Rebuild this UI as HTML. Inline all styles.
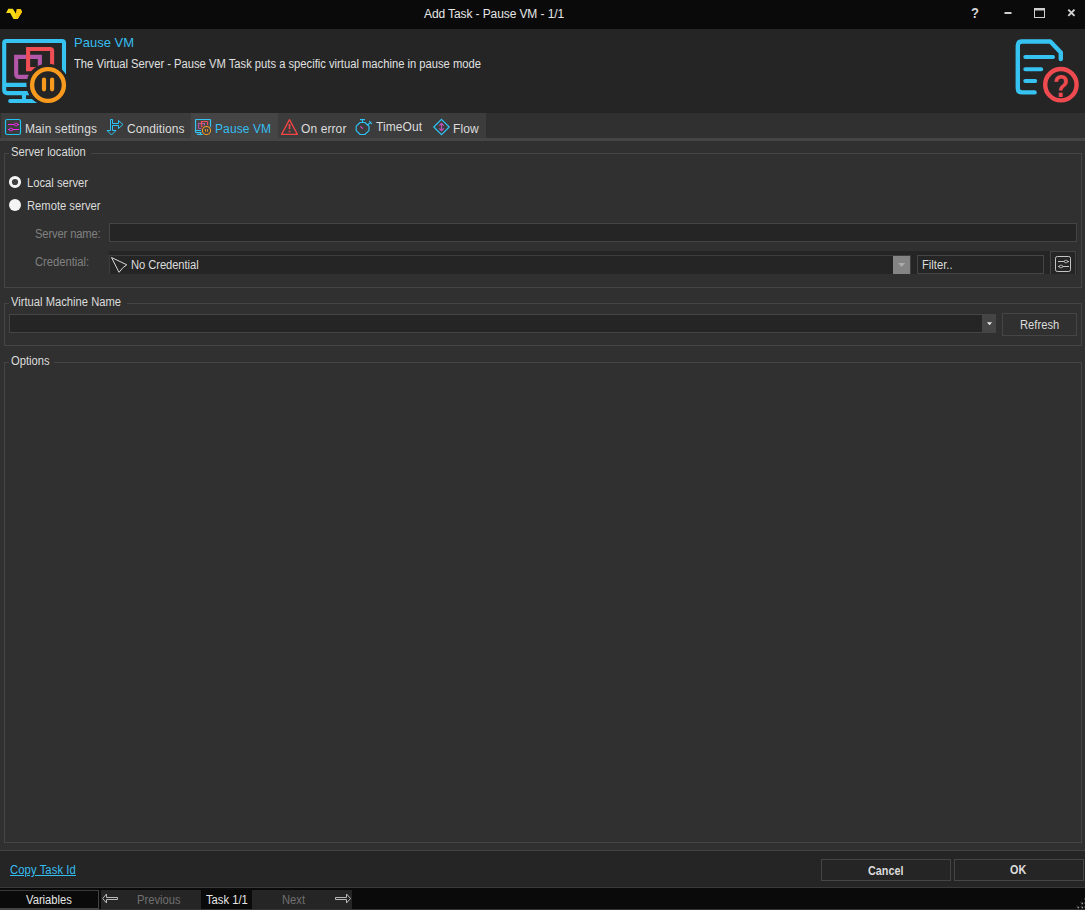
<!DOCTYPE html>
<html><head><meta charset="utf-8"><title>Add Task - Pause VM - 1/1</title>
<style>
*{box-sizing:border-box;margin:0;padding:0}
html,body{width:1085px;height:910px;overflow:hidden;background:#303030}
body{position:relative;font-family:"Liberation Sans",Arial,sans-serif;font-size:12px;color:#dcdcdc}
.abs{position:absolute}
svg{position:absolute;overflow:visible}
.t{position:absolute;white-space:nowrap;line-height:14px;height:14px;transform:scaleX(.934);transform-origin:0 0}
.ns{transform:none}
.tab{font-size:12px;transform:none;letter-spacing:.1px}
#titlebar{left:0;top:0;width:1085px;height:29px;background:#0a0a0a}
#header{left:0;top:29px;width:1085px;height:84px;background:#252525}
#tabbg{left:1px;top:113px;width:485px;height:25px;background:#3c3c3c}
#tabsel{left:191px;top:113px;width:87px;height:25px;background:#454545}
#tabline{left:0;top:138px;width:1085px;height:3px;background:#454545}
.grp{position:absolute;border:1px solid #454545}
.grplbl{position:absolute;background:#303030;height:3px}
.inp{position:absolute;background:#252525;border:1px solid #454545}
.btn{position:absolute;background:#252525;border:1px solid #454545;text-align:center;white-space:nowrap}
#bottom{left:0;top:850px;width:1085px;height:37px;background:#252525;border-top:1px solid #414141}
#status{left:0;top:887px;width:1085px;height:23px;background:#0a0a0a;border-top:1px solid #3a3a3a;border-bottom:1px solid #333}

</style></head><body>
<div id="titlebar" class="abs"></div>
<div id="header" class="abs"></div>
<div id="tabbg" class="abs"></div>
<div id="tabsel" class="abs"></div>
<div id="tabline" class="abs"></div>

<!-- app logo -->
<svg style="left:0;top:0" width="30" height="29" viewBox="0 0 30 29"><polygon points="8.3,8.8 12.8,8.8 16,13.8 16.9,9.1 20.7,9.1 22,11.9 17.7,19.1 13.5,19.1 10.2,13 6.1,13" fill="#fbdc14"/><polygon points="16.9,9.1 20.7,9.1 22,11.9 17.7,19.1 16.6,19.1 15.6,16.5" fill="#fcc80a"/></svg>

<div class="t ns" id="title" style="left:424px;top:7px;font-size:12px;letter-spacing:-.1px;color:#e6e6e6">Add Task - Pause VM - 1/1</div>

<!-- window controls -->
<div class="t ns" id="q" style="left:971px;top:6px;font-size:14px;font-weight:bold;color:#d4d4d4;transform:scaleX(.93)">?</div>
<svg style="left:990px;top:0" width="95" height="29" viewBox="990 0 95 29">
<rect x="1004.5" y="12" width="7" height="2" fill="#d0d0d0"/>
<rect x="1034.5" y="8.5" width="10" height="9" fill="none" stroke="#d0d0d0" stroke-width="1"/>
<rect x="1034" y="8" width="11" height="2.5" fill="#d0d0d0"/>
<path d="M1068.3,9.7 L1074.5,15.9 M1074.5,9.7 L1068.3,15.9" stroke="#d4d4d4" stroke-width="1.9" fill="none"/>
</svg>

<!-- main icon -->
<svg id="mainicon" style="left:2px;top:39px" width="64" height="64" viewBox="2 39 64 64">
<g fill="none" stroke-width="4.1">
<path d="M64,74 V43 Q64,41 62,41 H6.2 Q4.2,41 4.2,43 V90 Q4.2,93.1 7.3,93.1 H32 M4.2,84.9 H30 M24,93 V101" stroke="#36c3f2"/>
<path d="M10.2,101 H37" stroke="#36c3f2" stroke-linecap="round"/>
<path d="M26,56.9 H16.15 V73.9 Q16.15,76.9 19.15,76.9 H31 M30,56.9 H39.85 V67" stroke="#b357ab"/>
<path d="M28.1,71.2 V49 H50.1 Q52.1,49 52.1,51 V66 M26,69.1 H38" stroke="#f04e55"/>
<circle cx="47.4" cy="84.6" r="21" fill="#252525" stroke="none"/>
<circle cx="48" cy="85" r="15.9" stroke="#f79a1e" stroke-width="4.4"/>
<path d="M44,79.6 V89.3 M52.1,79.6 V89.3" stroke="#f79a1e" stroke-width="4.2" stroke-linecap="round"/>
</g>
</svg>

<div class="t ns" id="hname" style="left:74px;top:36px;font-size:13px;color:#36bdf0">Pause VM</div>
<div class="t" id="hdesc" style="left:74px;top:57px;color:#e0e0e0">The Virtual Server - Pause VM Task puts a specific virtual machine in pause mode</div>

<!-- help icon -->
<svg id="helpicon" style="left:1010px;top:35px" width="75" height="72" viewBox="1010 35 75 72">
<g fill="none" stroke="#36c3f2" stroke-width="4.4" stroke-linecap="round" stroke-linejoin="round">
<path d="M1060.8,59 V52.5 L1050.3,41.5 H1022 Q1017.8,41.5 1017.8,45.5 V88.3 Q1017.8,92.4 1022,92.4 H1034.6"/>
<path d="M1025.3,57.1 H1053 M1025.3,69.2 H1041.2 M1025.3,80.9 H1035.2" stroke-width="4"/>
</g>
<circle cx="1060.9" cy="84.7" r="15.7" fill="none" stroke="#ee4a4f" stroke-width="4.4"/>
<text transform="translate(1061,96.9) scale(.85,1)" text-anchor="middle" font-family="Liberation Sans,Arial,sans-serif" font-weight="bold" font-size="31" fill="#ee4a4f">?</text>
</svg>

<!-- tab icons -->
<svg style="left:0;top:113px" width="490" height="28" viewBox="0 113 490 28">
<g fill="none" stroke-width="1">
<rect x="5.5" y="119.5" width="15" height="15" rx="1.8" stroke="#22c3f5" stroke-width="1.2"/>
<g stroke="#f828f8"><path d="M8,124.5 H19 M8,129.5 H19" /><rect x="14.3" y="123.3" width="3.4" height="2.4" rx="1.2" fill="#3c3c3c"/><rect x="9.3" y="128.3" width="3.4" height="2.4" rx="1.2" fill="#3c3c3c"/></g>
<path d="M110.5,119.5 H112.5 V123.5 H118.5 V120.5 L123,124.5 L118.5,128.5 V125.5 H112.5 V130.5 H116 L111.5,135 L107,130.5 H110.5 Z" stroke="#2cc4f6"/>
<path d="M289.5,119.6 L297.4,134.4 H281.6 Z" stroke="#fa4444" stroke-width="1.25" stroke-linejoin="round"/>
<path d="M289.5,124 V129.3 M289.5,130.7 V132.3" stroke="#fa4444" stroke-width="1.6"/>
<g stroke="#2cc4f6" stroke-width="1.15"><path d="M360.2,122.5 H364.8 L369,126.2 V130.6 L364.8,134.5 H360.2 L356.2,130.6 V126.2 Z" stroke-linejoin="round"/><path d="M360,119.6 H365 M362.5,119.6 V122.2 M367.6,125 L370.5,122.3 M369.3,121.2 L371.9,123.8"/></g>
<path d="M360.3,126.3 L362.8,128.7" stroke="#d850c4" stroke-width="1.1"/>
<path d="M441.5,119.4 L449.2,127 L441.5,134.6 L433.8,127 Z" stroke="#2cc4f6" stroke-width="1.2"/>
<path d="M441.5,123.5 V130.6 M439.3,125.6 L441.5,123.4 L443.7,125.6 M439.3,128.5 L441.5,130.7 L443.7,128.5" stroke="#c050b8" stroke-width="1.2"/>
</g>
</svg>
<svg style="left:195px;top:119px" width="16" height="16" viewBox="2 39 64 64">
<g fill="none" stroke-width="4.8">
<path d="M64,74 V43 Q64,41 62,41 H6.2 Q4.2,41 4.2,43 V90 Q4.2,93.1 7.3,93.1 H32 M4.2,84.9 H30 M24,93 V101 M10.2,101 H37" stroke="#36c3f2"/>
<path d="M26,56.9 H16.15 V73.9 Q16.15,76.9 19.15,76.9 H31 M30,56.9 H39.85 V67" stroke="#b357ab"/>
<path d="M28.1,71.2 V49 H50.1 Q52.1,49 52.1,51 V66 M26,69.1 H38" stroke="#f04e55"/>
<circle cx="47.4" cy="84.6" r="21.4" fill="#454545" stroke="none"/>
<circle cx="48" cy="85" r="16.2" stroke="#f79a1e" stroke-width="4.2"/>
<path d="M44,79.6 V89.8 M52.1,79.6 V89.8" stroke="#f79a1e" stroke-width="3.6"/>
</g>
</svg>

<div class="t tab" id="tab1" style="left:25px;top:122px">Main settings</div>
<div class="t tab" id="tab2" style="left:127px;top:122px">Conditions</div>
<div class="t tab" id="tab3" style="left:215px;top:122px;color:#36bdf0">Pause VM</div>
<div class="t tab" id="tab4" style="left:301px;top:122px">On error</div>
<div class="t tab" id="tab5" style="left:376px;top:120px">TimeOut</div>
<div class="t tab" id="tab6" style="left:453px;top:122px">Flow</div>

<!-- Server location -->
<div class="grp" style="left:4px;top:153px;width:1078px;height:135px"></div>
<div class="grplbl" style="left:9px;top:152px;width:82px"></div><div class="t" id="g1" style="left:11px;top:145px">Server location</div>
<svg style="left:8px;top:175px" width="16" height="40" viewBox="8 175 16 40">
<circle cx="15" cy="182" r="4.6" fill="#404040" stroke="#f4f4f4" stroke-width="3"/>
<circle cx="15" cy="205" r="6" fill="#f4f4f4"/>
</svg>
<div class="t" id="r1" style="left:27px;top:176px">Local server</div>
<div class="t" id="r2" style="left:27px;top:199px">Remote server</div>
<div class="t" id="l1" style="left:35px;top:227px;color:#808080;letter-spacing:-.15px">Server name:</div>
<div class="t" id="l2" style="left:35px;top:255px;color:#808080">Credential:</div>
<div class="inp" style="left:109px;top:223px;width:968px;height:19px"></div>

<div class="abs" style="left:109px;top:251px;width:968px;height:23px;background:#252525;overflow:hidden">
  <div class="abs" style="left:0;top:4px;width:802px;height:22px;border:1px solid #3e3e3e"></div>
  <div class="abs" style="left:784px;top:5px;width:17px;height:20px;background:#848484"></div>
  <div class="abs" style="left:808px;top:4px;width:127px;height:19px;border:1px solid #454545"></div>
  <div class="abs" style="left:941px;top:0;width:26px;height:26px;border:1px solid #454545"></div>
</div>
<svg style="left:109px;top:251px" width="968" height="23" viewBox="109 251 968 23">
<path d="M111.5,257.5 L126.8,264.8 L123,267.6 L119,272.3 Z" fill="none" stroke="#d8d8d8" stroke-width="1" stroke-linejoin="round"/>
<path d="M898,263 H905.2 L901.6,267 Z" fill="#ababab"/>
<g fill="none" stroke="#c4c4c4" stroke-width="1"><rect x="1055.5" y="256.5" width="15" height="15" rx="1.8"/><path d="M1058,261.5 H1069 M1058,266.5 H1069"/><rect x="1064.3" y="260.3" width="3.4" height="2.4" rx="1.2" fill="#252525"/><rect x="1059.3" y="265.3" width="3.4" height="2.4" rx="1.2" fill="#252525"/></g>
</svg>
<div class="t" id="nocred" style="left:131px;top:258px;letter-spacing:-.08px">No Credential</div>
<div class="t" id="filter" style="left:922px;top:258px">Filter..</div>

<!-- VM name -->
<div class="grp" style="left:4px;top:303px;width:1078px;height:43px"></div>
<div class="grplbl" style="left:9px;top:302px;width:118px"></div><div class="t" id="g2" style="left:11px;top:295px">Virtual Machine Name</div>
<div class="inp" style="left:9px;top:314px;width:987px;height:19px"></div>
<div class="abs" style="left:982px;top:314px;width:14px;height:19px;background:#454545"></div>
<svg style="left:982px;top:314px" width="14" height="19" viewBox="982 314 14 19"><path d="M987,322.2 H992 L989.5,325.2 Z" fill="#e8e8e8"/></svg>
<div class="btn" style="left:1002px;top:313px;width:75px;height:23px;background:#303030"></div><div class="t" id="refresh" style="left:1020px;top:318px">Refresh</div>

<!-- Options -->
<div class="grp" style="left:4px;top:362px;width:1078px;height:481px"></div>
<div class="grplbl" style="left:9px;top:361px;width:45px"></div><div class="t" id="g3" style="left:11px;top:354px">Options</div>

<div id="bottom" class="abs"></div>
<div class="t" id="copy" style="left:10px;top:863px;letter-spacing:.12px;color:#36bdf0;text-decoration:underline">Copy Task Id</div>
<div class="btn" style="left:821px;top:859px;width:130px;height:22px"></div><div class="t" id="cancel" style="left:868px;top:864px;font-weight:bold;transform:scaleX(.9)">Cancel</div>
<div class="btn" style="left:954px;top:859px;width:130px;height:22px"></div><div class="t" id="ok" style="left:1010px;top:863px;font-weight:bold;transform:scaleX(.9)">OK</div>

<div id="status" class="abs"></div>
<div class="abs" style="left:0;top:890px;width:99px;height:20px;background:#0a0a0a;border-top:1px solid #3a3a3a;border-right:1px solid #444;border-bottom:2px solid #444"></div>
<div class="abs" style="left:101px;top:890px;width:100px;height:19px;background:#252525"></div>
<div class="abs" style="left:252px;top:890px;width:100px;height:19px;background:#252525"></div>
<div class="t" id="vars" style="left:26px;top:893px;color:#e6e6e6">Variables</div>
<div class="t" id="prev" style="left:137px;top:893px;color:#707070">Previous</div>
<div class="t" id="task" style="left:206px;top:893px;color:#e6e6e6">Task 1/1</div>
<div class="t" id="next" style="left:282px;top:893px;color:#707070">Next</div>
<svg style="left:100px;top:889px" width="260" height="19" viewBox="100 889 260 19">
<g fill="none" stroke="#b8b8b8" stroke-width="1">
<path d="M102.7,898.5 L106.5,894 V897.5 H117.5 V899.5 H106.5 V903 Z"/>
<path d="M350.5,898.5 L346.5,894 V897.5 H335.5 V899.5 H346.5 V903 Z"/>
</g></svg>
<svg style="left:1073px;top:897px" width="12" height="12" viewBox="1073 897 12 12"><g fill="#9a9a9a"><rect x="1081.5" y="902.7" width="1.6" height="1.6"/><rect x="1081.5" y="906.7" width="1.6" height="1.6"/><rect x="1077.5" y="906.7" width="1.6" height="1.6"/></g><g fill="#333"><rect x="1080.5" y="901.7" width="1.5" height="1.5"/><rect x="1080.5" y="905.7" width="1.5" height="1.5"/><rect x="1076.5" y="905.7" width="1.5" height="1.5"/><rect x="1084" y="898" width="1" height="2"/><rect x="1084" y="902" width="1" height="2"/><rect x="1084" y="906" width="1" height="2"/></g></svg>
</body></html>
